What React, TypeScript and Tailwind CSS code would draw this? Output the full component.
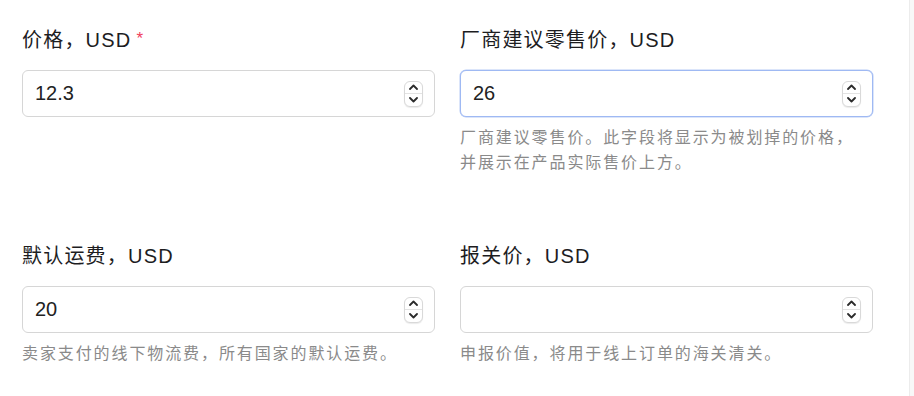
import React from "react";

const font = { fontFamily: '"Liberation Sans", "Noto Sans CJK SC", sans-serif' };

function Spinner() {
  return (
    <div className="absolute right-[12px] top-1/2 -translate-y-1/2 w-[19px] h-[26px] rounded-[6px] border border-[#d9d9d9] bg-white shadow-[0_1px_1px_rgba(0,0,0,0.08)] flex flex-col">
      <div className="flex-1 flex items-center justify-center border-b border-[#e3e3e3]">
        <svg width="9" height="6" viewBox="0 0 9 6" fill="none">
          <path d="M1 5 L4.5 1.5 L8 5" stroke="#2b2b2b" strokeWidth="1.8" strokeLinecap="round" strokeLinejoin="round" />
        </svg>
      </div>
      <div className="flex-1 flex items-center justify-center">
        <svg width="9" height="6" viewBox="0 0 9 6" fill="none">
          <path d="M1 1 L4.5 4.5 L8 1" stroke="#2b2b2b" strokeWidth="1.8" strokeLinecap="round" strokeLinejoin="round" />
        </svg>
      </div>
    </div>
  );
}

function NumberField({ label, value, required, focused, hint }: { label: string; value: string; required?: boolean; focused?: boolean; hint?: string[] }) {
  return (
    <div className="flex flex-col">
      <label className="h-7 leading-7 text-[20px] text-[#1d1d1f] tracking-[1.2px] mb-4 flex items-center">
        {label}
        {required && <span className="text-[#f0405c] text-[17px] ml-[5px] -mt-[3px] leading-none">*</span>}
      </label>
      <div className="relative">
        <input
          type="text"
          readOnly
          value={value}
          className={
            "w-full h-[47px] rounded-[6px] bg-white px-3 text-[20px] text-[#222] outline-none border " +
            (focused ? "border-[#9fb9f3] shadow-[0_0_0_0.5px_#b7cbf6]" : "border-[#d6d6d6]")
          }
          style={font}
        />
        <Spinner />
      </div>
      {hint && (
        <div className="mt-2 text-[16px] leading-[25px] text-[#8a8a8a] tracking-[1.9px]">
          {hint.map((h) => (
            <div key={h}>{h}</div>
          ))}
        </div>
      )}
    </div>
  );
}

export default function App() {
  return (
    <div className="w-[914px] h-[396px] bg-white flex overflow-hidden" style={font}>
      <div className="flex-1 pl-[22px] pt-[26px]">
        <div className="grid grid-cols-[413px_413px] gap-x-[25px] gap-y-[67px]">
          <NumberField label="价格，USD" value="12.3" required />
          <NumberField
            label="厂商建议零售价，USD"
            value="26"
            focused
            hint={["厂商建议零售价。此字段将显示为被划掉的价格，", "并展示在产品实际售价上方。"]}
          />
          <NumberField label="默认运费，USD" value="20" hint={["卖家支付的线下物流费，所有国家的默认运费。"]} />
          <NumberField label="报关价，USD" value="" hint={["申报价值，将用于线上订单的海关清关。"]} />
        </div>
      </div>
      <div className="w-[5px] border-l border-[#ececec] bg-[#f8f8f8]" />
    </div>
  );
}
